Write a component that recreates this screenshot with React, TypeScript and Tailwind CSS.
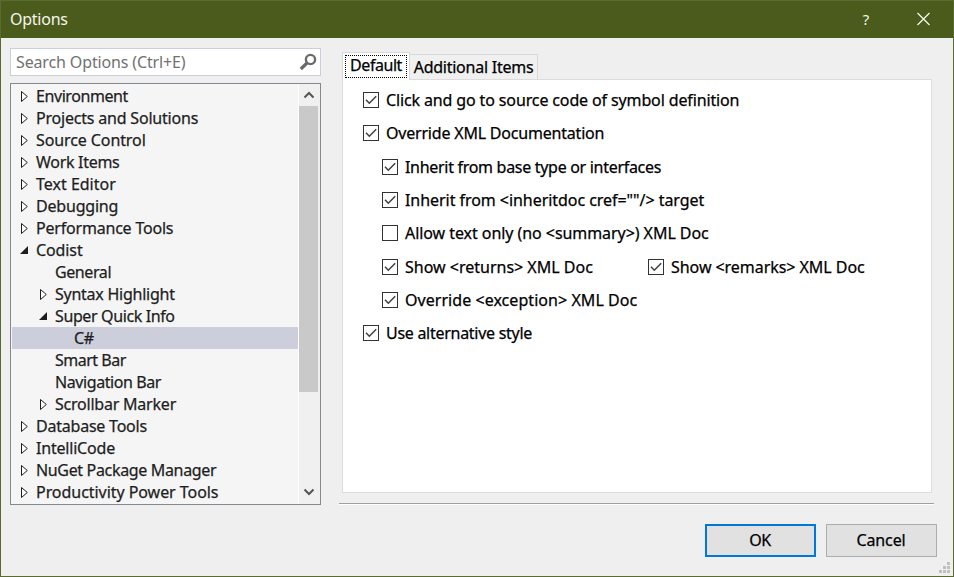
import type { ReactNode } from "react";

type Arrow = "closed" | "open" | "none";
type Node = { label: string; level: 0 | 1 | 2; arrow: Arrow; selected?: boolean; track?: string };

const nodes: Node[] = [
  { label: "Environment", level: 0, arrow: "closed", track: "tracking-[-0.42px]" },
  { label: "Projects and Solutions", level: 0, arrow: "closed", track: "tracking-[-0.2px]" },
  { label: "Source Control", level: 0, arrow: "closed" },
  { label: "Work Items", level: 0, arrow: "closed", track: "tracking-[-0.3px]" },
  { label: "Text Editor", level: 0, arrow: "closed", track: "tracking-[0px]" },
  { label: "Debugging", level: 0, arrow: "closed", track: "tracking-[-0.2px]" },
  { label: "Performance Tools", level: 0, arrow: "closed", track: "tracking-[-0.2px]" },
  { label: "Codist", level: 0, arrow: "open" },
  { label: "General", level: 1, arrow: "none", track: "tracking-[-0.4px]" },
  { label: "Syntax Highlight", level: 1, arrow: "closed", track: "tracking-[-0.25px]" },
  { label: "Super Quick Info", level: 1, arrow: "open", track: "tracking-[-0.38px]" },
  { label: "C#", level: 2, arrow: "none", selected: true, track: "tracking-[-0.4px]" },
  { label: "Smart Bar", level: 1, arrow: "none", track: "tracking-[-0.5px]" },
  { label: "Navigation Bar", level: 1, arrow: "none", track: "tracking-[-0.42px]" },
  { label: "Scrollbar Marker", level: 1, arrow: "closed", track: "tracking-[-0.22px]" },
  { label: "Database Tools", level: 0, arrow: "closed", track: "tracking-[-0.22px]" },
  { label: "IntelliCode", level: 0, arrow: "closed", track: "tracking-[-0.2px]" },
  { label: "NuGet Package Manager", level: 0, arrow: "closed", track: "tracking-[-0.34px]" },
  { label: "Productivity Power Tools", level: 0, arrow: "closed", track: "tracking-[-0.05px]" },
];

const indent = { 0: "pl-[7px]", 1: "pl-[26px]", 2: "pl-[45px]" };

function Expander({ arrow }: { arrow: Arrow }) {
  return (
    <svg width="12" height="12" viewBox="0 0 12 12" className="mr-[5px] shrink-0">
      {arrow === "closed" && <path d="M2.5 1.5v10L8.3 6.5z" fill="#fff" stroke="#1e1e1e" />}
      {arrow === "open" && <path d="M9 2v8H1z" fill="#1e1e1e" />}
    </svg>
  );
}

function Check({
  label,
  checked = true,
  className = "",
  track = "",
}: {
  label: string;
  checked?: boolean;
  className?: string;
  track?: string;
}) {
  return (
    <label className={`flex items-start ${className}`}>
      <span className="size-4 shrink-0 border border-[#333] bg-white">
        {checked && (
          <svg width="14" height="14" viewBox="0 0 14 14" fill="none" stroke="#404040" strokeWidth="1.5">
            <path d="M2 6.8 5.3 10.2 12.2 3.2" />
          </svg>
        )}
      </span>
      <span className={`ml-[7px] leading-4 whitespace-nowrap ${track}`}>{label}</span>
    </label>
  );
}

function Button({ children, className }: { children: ReactNode; className: string }) {
  return (
    <button className={`flex h-[33px] w-[111px] items-center justify-center bg-[#e1e1e1] pr-px pb-[2px] ${className}`}>
      {children}
    </button>
  );
}

function Chevron({ d }: { d: string }) {
  return (
    <div className="flex h-[21px] w-[19px] items-center justify-center">
      <svg width="12" height="8" viewBox="0 0 12 8" fill="none" stroke="#555" strokeWidth="2">
        <path d={d} />
      </svg>
    </div>
  );
}

export default function App() {
  return (
    <div className="flex h-[577px] w-[954px] flex-col border border-[#5a6b31] bg-[#efefef] font-['Noto_Sans','Open_Sans',sans-serif] text-[16px] font-normal tracking-[-0.1px] text-black [-webkit-text-stroke:0.25px]">
      <header className="flex h-[37px] items-center bg-[#4b5b1b] pl-[9px] text-[#f4f6ee] [-webkit-text-stroke:0]">
        <span className="flex-1 pb-px tracking-[-0.25px]">Options</span>
        <span className="w-[60px] pb-px text-center text-[15px]">?</span>
        <svg width="57" height="37" viewBox="0 0 57 37" fill="none" stroke="#f4f6ee" strokeWidth="1.3">
          <path d="m21.500 12 12 12m0-12-12 12" />
        </svg>
      </header>

      <main className="flex h-[467px] pt-[10px] pl-[9px]">
        <aside className="w-[311px]">
          <div className="flex h-7 items-center justify-between border border-[#cccedb] bg-white pr-[3px] pl-[5px] tracking-[-0.14px] text-[#717171] [-webkit-text-stroke:0]">
            <span>Search Options (Ctrl+E)</span>
            <svg width="18" height="18" viewBox="0 0 18 18" fill="none" stroke="#6a6a6a">
              <circle cx="11.5" cy="6.5" r="4.6" strokeWidth="2.4" />
              <path d="M8 10 1.800 16" strokeWidth="3.2" />
            </svg>
          </div>
          <div className="mt-[7px] flex h-[422px] border border-[#828790] bg-[#f5f5f5] text-[#1e1e1e]">
            <ul className="w-[287px] overflow-hidden py-px pl-px">
              {nodes.map((n) => (
                <li
                  key={n.label}
                  className={`flex h-[22px] items-center whitespace-nowrap ${indent[n.level]} ${n.selected ? "bg-[#cccedb]" : ""}`}
                >
                  <Expander arrow={n.arrow} />
                  <span className={n.track}>{n.label}</span>
                </li>
              ))}
            </ul>
            <div className="flex w-[22px] flex-col border-l border-white bg-[#f0f0f0]">
              <Chevron d="M1.500 6.500 6 2l4.500 4.500" />
              <div className="mt-px h-[286px] w-[19px] bg-[#c9c9c9]" />
              <div className="flex-1" />
              <Chevron d="M1.500 1.500 6 6l4.500-4.500" />
              <div className="h-[2px]" />
            </div>
          </div>
        </aside>

        <section className="ml-[18px] flex h-[456px] w-[595px] flex-col border-b border-[#a0a0a0] pl-[3px] shadow-[0_1px_0_#fff]">
          <div className="mt-1 flex h-[27px] items-end">
            <div className="z-10 -mb-px h-7 w-[68px] border border-b-0 border-[#d9d9d9] bg-white p-[2px]">
              <div className="flex h-[23px] w-[62px] items-center justify-center border border-dotted border-black pb-[3px] tracking-[-0.45px]">
                Default
              </div>
            </div>
            <div className="-ml-px flex h-[25px] w-[129px] items-center justify-center border border-b-0 border-[#d9d9d9] bg-[#f0f0f0] tracking-[-0.25px]">
              <span>Additional Items</span>
            </div>
          </div>
          <div className="h-[414px] w-[590px] border border-[#dcdcdc] bg-white pt-3 pl-5">
            <Check className="h-[33px]" track="tracking-[-0.13px]" label="Click and go to source code of symbol definition" />
            <Check className="h-[34px]" track="tracking-[-0.2px]" label="Override XML Documentation" />
            <div className="pl-[19px]">
              <Check className="h-[33px]" track="tracking-[-0.3px]" label="Inherit from base type or interfaces" />
              <Check className="h-[33px]" track="tracking-[-0.05px]" label={'Inherit from <inheritdoc cref=""/> target'} />
              <Check
                className="h-[34px]"
                track="tracking-[-0.06px]"
                checked={false}
                label="Allow text only (no <summary>) XML Doc"
              />
              <div className="flex h-[33px]">
                <Check className="w-[266px]" track="tracking-[0px]" label="Show <returns> XML Doc" />
                <Check track="tracking-[-0.05px]" label="Show <remarks> XML Doc" />
              </div>
              <Check className="h-[33px]" track="tracking-[0.05px]" label="Override <exception> XML Doc" />
            </div>
            <Check track="tracking-[-0.28px]" label="Use alternative style" />
          </div>
        </section>
      </main>

      <footer className="flex justify-end gap-[10px] pt-[19px] pr-4">
        <Button className="border-2 border-[#0078d7] tracking-[-0.5px]">OK</Button>
        <Button className="border border-[#adadad]">Cancel</Button>
      </footer>
      <svg width="12" height="12" viewBox="0 0 12 12" fill="#bfbfbf" className="mt-[5px] mr-[2px] self-end">
        <path d="M8 0h3v3H8zM4 4h3v3H4zM8 4h3v3H8zM0 8h3v3H0zM4 8h3v3H4zM8 8h3v3H8z" />
      </svg>
    </div>
  );
}
